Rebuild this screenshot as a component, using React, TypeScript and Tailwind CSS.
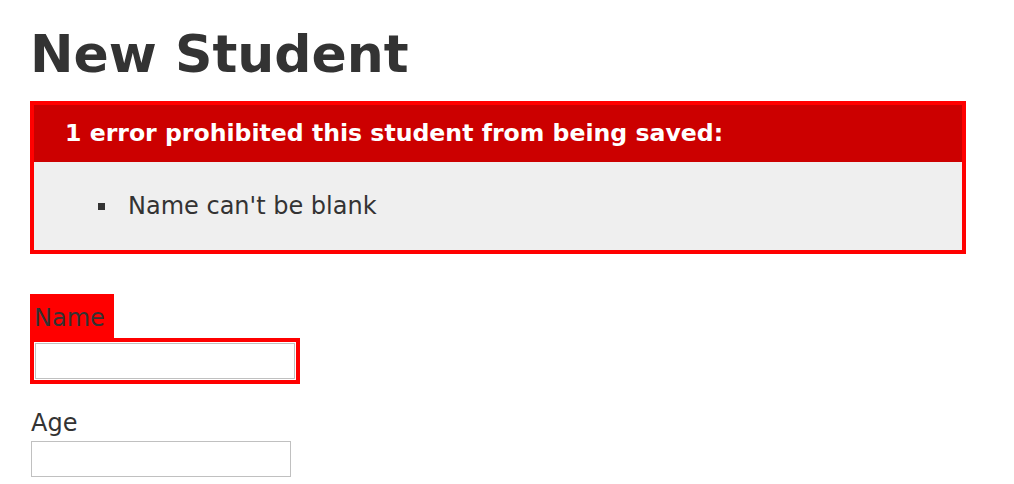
export default function App() {
  return (
    <div className="min-h-[484px] bg-white px-[30px] pt-[22px] text-[#333333] font-['DejaVu_Sans',Verdana,sans-serif]">
      <h1 className="text-[52px] leading-[64px] font-bold">New Student</h1>

      <div className="mt-[15px] w-[936px] border-4 border-[#ff0000] bg-[#efefef]">
        <h2 className="flex h-[57px] items-center bg-[#cc0000] pl-[31px] text-[23.6px] font-bold text-white">
          1 error prohibited this student from being saved:
        </h2>
        <ul className="flex h-[88px] items-center pl-[64px]">
          <li className="flex items-center gap-[23px] text-[24px]">
            <span className="h-[7px] w-[7px] bg-[#333333]" />
            Name can't be blank
          </li>
        </ul>
      </div>

      <form className="mt-[40px]">
        <div className="inline-block bg-[#ff0000] pt-[6px] pb-[2px] pl-[4px] pr-[9px] text-[24px] leading-[36px]">
          <label htmlFor="student_name">Name</label>
        </div>
        <div>
          <div className="inline-block bg-[#ff0000] p-[4px]">
            <div className="bg-white p-[1px]">
              <input id="student_name" type="text" className="block h-[36px] w-[260px] border border-[#c0c0c0] bg-white" />
            </div>
          </div>
        </div>

        <div className="mt-[22px] ml-[1px]">
          <label htmlFor="student_age" className="block text-[24px] leading-[34px]">Age</label>
          <input id="student_age" type="text" className="mt-[1px] block h-[36px] w-[260px] border border-[#c0c0c0] bg-white" />
        </div>
      </form>
    </div>
  );
}
